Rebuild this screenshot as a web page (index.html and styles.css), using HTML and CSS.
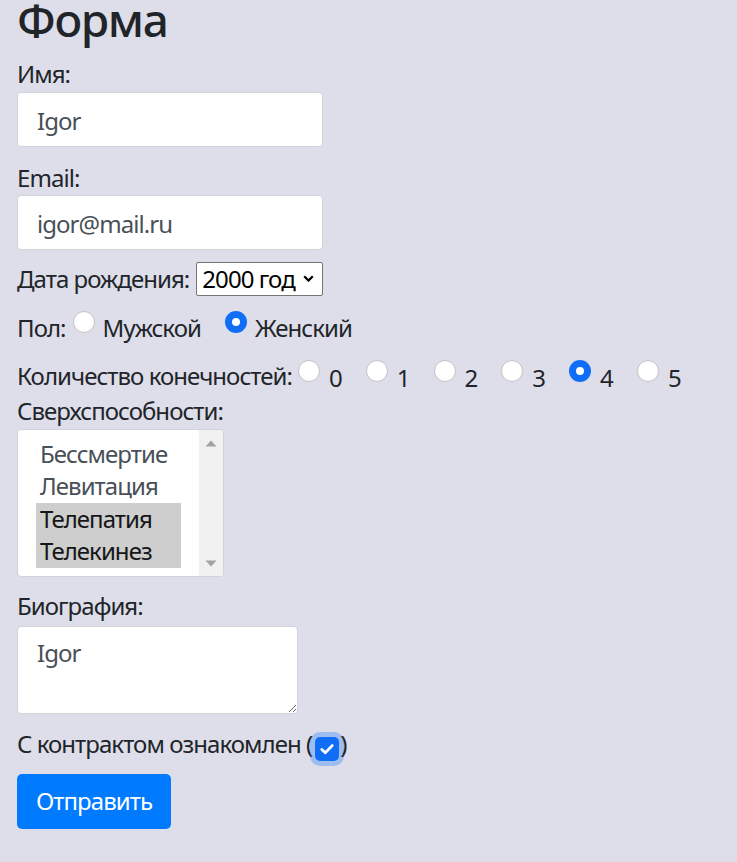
FILE: index.html
```html
<!DOCTYPE html>
<html lang="ru">
<head>
<meta charset="utf-8">
<title>Форма</title>
<link rel="stylesheet" href="styles.css">
</head>
<body>
<main class="page">
  <h1 class="title">Форма</h1>
  <form class="form">
    <label class="lbl lbl-name" for="name">Имя:</label>
    <input class="field" id="name" type="text" value="Igor">

    <label class="lbl lbl-email" for="email">Email:</label>
    <input class="field" id="email" type="text" value="igor@mail.ru">

    <div class="row row-date"><span>Дата рождения:</span><span class="select"><span>2000 год</span><svg class="chev" width="11" height="7" viewBox="0 0 11 7"><path d="M1.2 1.3l4.3 4.2 4.3-4.2" fill="none" stroke="#000" stroke-width="2.3"/></svg></span></div>

    <div class="row row-sex"><span>Пол:</span><span class="radio r-first"></span><span class="opt-text">Мужской</span><span class="radio checked r-next"></span><span class="opt-text">Женский</span></div>

    <div class="row row-count"><span>Количество конечностей:</span><span class="radio sm r-first"></span><span class="num">0</span><span class="radio sm r-next"></span><span class="num">1</span><span class="radio sm r-next"></span><span class="num">2</span><span class="radio sm r-next"></span><span class="num">3</span><span class="radio sm checked r-next"></span><span class="num">4</span><span class="radio sm r-next"></span><span class="num">5</span></div>

    <div class="lbl lbl-powers">Сверхспособности:</div>
    <div class="listbox" role="listbox">
      <div class="opts">
        <div class="opt">Бессмертие</div>
        <div class="opt">Левитация</div>
        <div class="opt sel">Телепатия</div>
        <div class="opt sel">Телекинез</div>
      </div>
      <div class="scrollbar">
        <svg width="12" height="7" viewBox="0 0 12 7"><path d="M6 0.5L11.5 6.5H0.5Z" fill="#a3a3a3"/></svg>
        <svg width="12" height="7" viewBox="0 0 12 7"><path d="M6 6.5L11.5 0.5H0.5Z" fill="#a3a3a3"/></svg>
      </div>
    </div>

    <label class="lbl lbl-bio" for="bio">Биография:</label>
    <textarea class="bio" id="bio">Igor</textarea>

    <div class="row row-contract">С контрактом ознакомлен (<span class="check"><svg width="24" height="24" viewBox="0 0 24 24"><path d="M6.8 12.4l3.5 3.4 6.9-7.2" fill="none" stroke="#fff" stroke-width="2.8" stroke-linecap="round" stroke-linejoin="round"/></svg></span>)</div>

    <button class="btn" type="button">Отправить</button>
  </form>
</main>
</body>
</html>
```
FILE: styles.css
```css
html, body {
  margin: 0;
  padding: 0;
}
body {
  background: #dedeea;
  font-family: "Noto Sans", "Open Sans", sans-serif;
  font-size: 24px;
  line-height: 32px;
  letter-spacing: -0.95px;
  color: #212529;
  min-height: 862px;
}
.page {
  padding: 0 17px;
}
.title {
  margin: 0;
  padding-top: 1px;
  font-size: 46px;
  line-height: 0.8;
  font-weight: 500;
  letter-spacing: -1.3px;
  color: #212529;
}
.form {
  display: block;
}
.lbl {
  display: block;
}
.lbl-name { margin-top: 20px; margin-bottom: 2px; }
.lbl-email { margin-top: 15px; margin-bottom: 1px; }

.field {
  display: block;
  width: 306px;
  height: 55px;
  box-sizing: border-box;
  margin: 0;
  padding: 2px 19px 0;
  border: 1px solid #ced4da;
  border-radius: 4px;
  background: #fff;
  font: inherit;
  letter-spacing: inherit;
  color: #495057;
  outline: none;
}

.row {
  display: block;
  white-space: nowrap;
}
.row-date { margin-top: 12px; }
.row-sex { margin-top: 15px; }
.row-count { margin-top: 16px; }
.row-contract { margin-top: 14px; }

.select {
  display: inline-flex;
  align-items: center;
  justify-content: space-between;
  width: 127px;
  height: 34px;
  box-sizing: border-box;
  margin-left: 7px;
  padding: 0 8px 0 5px;
  border: 1px solid #767676;
  border-radius: 2px;
  background: #fff;
  color: #000;
  line-height: 30px;
}
.chev {
  display: block;
}

.radio {
  display: inline-block;
  width: 22px;
  height: 22px;
  box-sizing: border-box;
  border-radius: 50%;
  background: #fff;
  border: 1px solid #c4c4c4;
  vertical-align: 4px;
  margin-right: 8px;
}
.radio.sm {
  vertical-align: 3px;
  margin-right: 9px;
}
.radio.checked {
  border: 7px solid #106ef6;
}
.r-first { margin-left: 7px; }
.row-count .r-first { margin-left: 6px; }
.r-next { margin-left: 24px; }
.num {
  vertical-align: -2px;
}

.lbl-powers { margin-top: 1px; }
.listbox {
  display: flex;
  width: 207px;
  height: 148px;
  box-sizing: border-box;
  margin-top: 2px;
  border: 1px solid #ced4da;
  border-radius: 4px;
  background: #fff;
  overflow: hidden;
}
.opts {
  flex: 1;
  padding: 8px 18px;
}
.opt {
  height: 32.5px;
  line-height: 32.5px;
  padding-left: 4px;
  color: #495057;
}
.opt.sel {
  background: #cecece;
  color: #161616;
}
.scrollbar {
  width: 24px;
  background: #f1f1f1;
  display: flex;
  flex-direction: column;
  justify-content: space-between;
  align-items: center;
  padding: 10px 0 9px;
}
.scrollbar svg { display: block; }

.lbl-bio { margin-top: 13px; }
.bio {
  display: block;
  width: 281px;
  height: 88px;
  box-sizing: border-box;
  margin: 4px 0 0;
  padding: 10px 19px 0;
  border: 1px solid #ced4da;
  border-radius: 4px;
  background: #fff;
  font: inherit;
  letter-spacing: inherit;
  line-height: 32px;
  color: #495057;
  resize: both;
  outline: none;
}

.check {
  display: inline-block;
  width: 24px;
  height: 24px;
  overflow: hidden;
  border-radius: 5px;
  background: #106ef6;
  box-shadow: 0 0 0 5px rgba(13, 110, 253, 0.3);
  vertical-align: -8px;
  margin: 0 1px 0 3px;
}
.check svg { display: block; }

.btn {
  display: block;
  height: 55px;
  margin-top: 13px;
  padding: 0 19px;
  border: 0;
  border-radius: 5px;
  background: #007bff;
  color: #fff;
  font: inherit;
  letter-spacing: inherit;
  line-height: 32px;
}
```
